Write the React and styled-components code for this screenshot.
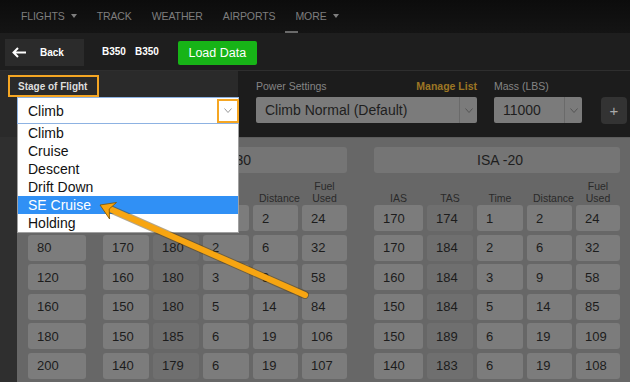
import React from 'react';
import styled, { createGlobalStyle } from 'styled-components';

const GlobalStyle = createGlobalStyle`
  html, body { margin: 0; padding: 0; background: #1c1c1c; }
  body { font-family: "Liberation Sans", Arial, sans-serif; }
  * { box-sizing: border-box; }
`;

const ORANGE = '#f5a623';

const navItems = [
  { label: 'FLIGHTS', caret: true },
  { label: 'TRACK' },
  { label: 'WEATHER' },
  { label: 'AIRPORTS' },
  { label: 'MORE', caret: true, active: true },
];

const stages = ['Climb', 'Cruise', 'Descent', 'Drift Down', 'SE Cruise', 'Holding'];

const altitudes = ['40', '80', '120', '160', '180', '200'];

const leftRows = [
  ['170', '174', '1', '2', '24'],
  ['170', '180', '2', '6', '32'],
  ['160', '180', '3', '9', '58'],
  ['150', '180', '5', '14', '84'],
  ['150', '185', '6', '19', '106'],
  ['140', '179', '6', '19', '107'],
];

const rightRows = [
  ['170', '174', '1', '2', '24'],
  ['170', '184', '2', '6', '32'],
  ['160', '184', '3', '9', '58'],
  ['150', '184', '5', '14', '85'],
  ['150', '189', '6', '19', '109'],
  ['140', '183', '6', '19', '108'],
];

const columns = ['IAS', 'TAS', 'Time', 'Distance', 'Fuel Used'];

export default function App() {
  return (
    <>
      <GlobalStyle />
      <Page>
        <NavBar>
          {navItems.map((item) => (
            <NavItem key={item.label} $active={item.active}>
              {item.label}
              {item.caret && <Caret />}
            </NavItem>
          ))}
        </NavBar>

        <Toolbar>
          <BackButton>
            <svg width="16" height="11" viewBox="0 0 16 11">
              <path d="M15 5.5H2.5M7 1L2.5 5.5L7 10" fill="none" stroke="#fff" strokeWidth="2" />
            </svg>
            <span>Back</span>
          </BackButton>
          <AircraftName>B350</AircraftName>
          <AircraftName>B350</AircraftName>
          <LoadButton>Load Data</LoadButton>
        </Toolbar>

        <Controls>
          <StagePanel>
            <StageLabel>Stage of Flight</StageLabel>
            <StageSelect>
              <span>Climb</span>
              <ChevronBox>
                <Chevron color="#999" />
              </ChevronBox>
              <StageMenu>
                {stages.map((s) => (
                  <StageOption key={s} $selected={s === 'SE Cruise'}>
                    {s}
                  </StageOption>
                ))}
              </StageMenu>
            </StageSelect>
          </StagePanel>

          <Field $width={221} $margin={18}>
            <LabelRow>
              <FieldLabel>Power Settings</FieldLabel>
              <ManageLink>Manage List</ManageLink>
            </LabelRow>
            <DimSelect>
              <span>Climb Normal (Default)</span>
              <SelectArrow>
                <Chevron color="#555" />
              </SelectArrow>
            </DimSelect>
          </Field>

          <Field $width={88} $margin={17}>
            <LabelRow>
              <FieldLabel>Mass (LBS)</FieldLabel>
            </LabelRow>
            <DimSelect>
              <span>11000</span>
              <SelectArrow>
                <Chevron color="#555" />
              </SelectArrow>
            </DimSelect>
          </Field>

          <PlusButton>+</PlusButton>
        </Controls>

        <TableArea>
          <SideStrip />
          <TablePanel>
            <Group $offset={0}>
              <HeaderSlot />
              <Grid $cols="58px">
                <ColLabel>Altitude</ColLabel>
                {altitudes.map((a) => (
                  <Cell key={a}>{a}</Cell>
                ))}
              </Grid>
            </Group>

            <Group $offset={17}>
              <HeaderBox>ISA -30</HeaderBox>
              <Grid $cols="46px 46px 46px 45px 45px">
                {columns.map((c) => (
                  <ColLabel key={c}>{c}</ColLabel>
                ))}
                {leftRows.map((row, r) =>
                  row.map((v, i) => (
                    <Cell key={`l${r}-${i}`} $dim={i === 1}>
                      {v}
                    </Cell>
                  ))
                )}
              </Grid>
            </Group>

            <Group $offset={27}>
              <HeaderBox>ISA -20</HeaderBox>
              <Grid $cols="49px 46px 46px 45px 44px">
                {columns.map((c) => (
                  <ColLabel key={c}>{c}</ColLabel>
                ))}
                {rightRows.map((row, r) =>
                  row.map((v, i) => (
                    <Cell key={`r${r}-${i}`} $dim={i === 1}>
                      {v}
                    </Cell>
                  ))
                )}
              </Grid>
            </Group>
          </TablePanel>
        </TableArea>

        <Annotation viewBox="0 0 630 382" width="630" height="382">
          <line x1="305" y1="295" x2="110" y2="209" stroke="#5a3c00" strokeWidth="8" strokeLinecap="round" opacity="0.45" />
          <line x1="305" y1="295" x2="110" y2="209" stroke="#f7a511" strokeWidth="6" strokeLinecap="round" />
          <polygon points="100,205 116.5,202.5 109.2,209 109.6,219" fill="#f7a511" stroke="#7a5200" strokeWidth="0.8" strokeLinejoin="round" />
        </Annotation>
      </Page>
    </>
  );
}

function Chevron({ color }) {
  return (
    <svg width="8" height="5" viewBox="0 0 8 5">
      <polyline points="0.5,0.5 4,4.5 7.5,0.5" fill="none" stroke={color} strokeWidth="1" />
    </svg>
  );
}

const Page = styled.div`
  position: relative;
  width: 630px;
  height: 382px;
  overflow: hidden;
  background: #1c1c1c;
  display: flex;
  flex-direction: column;
`;

const NavBar = styled.nav`
  height: 33px;
  flex-shrink: 0;
  display: flex;
  align-items: stretch;
  gap: 20px;
  padding-left: 21px;
  background: linear-gradient(#0c0c0c, #141414);
`;

const NavItem = styled.div`
  position: relative;
  display: flex;
  align-items: center;
  padding-bottom: 2px;
  font-size: 10.5px;
  color: #7e7e7e;
  letter-spacing: -0.1px;
  &::before {
    content: '';
    display: ${({ $active }) => ($active ? 'block' : 'none')};
    position: absolute;
    left: -10px;
    bottom: 0;
    width: 13px;
    height: 2px;
    background: #6a6a6a;
  }
`;

const Caret = styled.span`
  margin-left: 6px;
  width: 0;
  height: 0;
  border-left: 3px solid transparent;
  border-right: 3px solid transparent;
  border-top: 4px solid #7e7e7e;
`;

const Toolbar = styled.div`
  height: 38px;
  flex-shrink: 0;
  display: flex;
  align-items: center;
  padding-left: 5px;
  background: #1e1e1e;
  border-bottom: 1px solid #2e2e2e;
`;

const BackButton = styled.div`
  width: 79px;
  height: 27px;
  margin-top: 1px;
  display: flex;
  align-items: center;
  gap: 13px;
  padding-left: 6px;
  background: #2b2b2b;
  color: #fff;
  font-size: 10px;
  font-weight: bold;
`;

const AircraftName = styled.div`
  margin-left: 9px;
  &:nth-of-type(2) {
    margin-left: 18px;
  }
  color: #fff;
  font-size: 10px;
  font-weight: bold;
`;

const LoadButton = styled.div`
  margin-left: 19px;
  width: 79px;
  height: 24px;
  margin-top: 2px;
  display: flex;
  align-items: center;
  justify-content: center;
  background: #17b417;
  border-radius: 2px;
  color: #fff;
  font-size: 12.5px;
`;

const Controls = styled.div`
  height: 66px;
  flex-shrink: 0;
  display: flex;
  align-items: flex-start;
  background: #1c1c1c;
  position: relative;
  z-index: 2;
`;

const StagePanel = styled.div`
  width: 238px;
  align-self: stretch;
  background: #2a2a2a;
  padding-top: 4px;
`;

const StageLabel = styled.div`
  margin-left: 8px;
  width: 91px;
  height: 22px;
  border: 2px solid ${ORANGE};
  padding-left: 8px;
  display: flex;
  align-items: center;
  color: #ddd;
  font-size: 10px;
  font-weight: bold;
`;

const StageSelect = styled.div`
  position: relative;
  margin-left: 17px;
  width: 222px;
  height: 27px;
  display: flex;
  align-items: center;
  justify-content: space-between;
  padding-left: 10px;
  background: #fff;
  border: 1px solid #8db2e2;
  color: #111;
  font-size: 14px;
`;

const ChevronBox = styled.div`
  width: 22px;
  height: 24px;
  margin-right: -1px;
  border: 2px solid ${ORANGE};
  display: flex;
  align-items: center;
  justify-content: center;
  background: #fff;
`;

const StageMenu = styled.div`
  position: absolute;
  top: 26px;
  left: -1px;
  width: 222px;
  background: #fff;
  border: 1px solid #a0a0a0;
  border-top: none;
`;

const StageOption = styled.div`
  height: 18px;
  line-height: 18px;
  padding-left: 10px;
  font-size: 14px;
  color: ${({ $selected }) => ($selected ? '#fff' : '#111')};
  background: ${({ $selected }) => ($selected ? '#3090f5' : '#fff')};
`;

const Field = styled.div`
  width: ${({ $width }) => $width}px;
  margin-left: ${({ $margin }) => $margin}px;
  padding-top: 9px;
`;

const LabelRow = styled.div`
  height: 12px;
  margin-bottom: 5px;
  display: flex;
  align-items: center;
  justify-content: space-between;
`;

const FieldLabel = styled.span`
  font-size: 10.5px;
  color: #858585;
`;

const ManageLink = styled.span`
  font-size: 10.5px;
  font-weight: bold;
  color: #9c7624;
`;

const DimSelect = styled.div`
  height: 26px;
  display: flex;
  align-items: center;
  justify-content: space-between;
  padding-left: 9px;
  background: #7b7b7b;
  border-radius: 2px;
  color: #1e1e1e;
  font-size: 14px;
`;

const SelectArrow = styled.div`
  width: 18px;
  height: 100%;
  display: flex;
  align-items: center;
  justify-content: center;
  border-left: 1px solid #6a6a6a;
`;

const PlusButton = styled.div`
  margin-left: 19px;
  margin-top: 26px;
  width: 26px;
  height: 27px;
  display: flex;
  align-items: center;
  justify-content: center;
  background: #333;
  border-radius: 4px;
  color: #aaa;
  font-size: 15px;
`;

const TableArea = styled.div`
  flex: 1;
  display: flex;
  min-height: 0;
`;

const SideStrip = styled.div`
  width: 17px;
  background: #2f2f2f;
`;

const TablePanel = styled.div`
  flex: 1;
  display: flex;
  align-items: flex-start;
  padding: 9px 0 0 11px;
  background: #676767;
  border-top: 1px solid #5c5c5c;
  overflow: hidden;
`;

const Group = styled.div`
  margin-left: ${({ $offset }) => $offset}px;
  display: flex;
  flex-direction: column;
`;

const HeaderSlot = styled.div`
  height: 26px;
`;

const HeaderBox = styled.div`
  height: 26px;
  display: flex;
  align-items: center;
  justify-content: center;
  padding-left: 6px;
  background: #757575;
  border-radius: 3px;
  color: #1e1e1e;
  font-size: 14px;
`;

const Grid = styled.div`
  display: grid;
  grid-template-columns: ${({ $cols }) => $cols};
  grid-template-rows: 28.5px repeat(6, 26px);
  column-gap: 4px;
  row-gap: 3.5px;
`;

const ColLabel = styled.div`
  align-self: end;
  margin-bottom: -2px;
  text-align: center;
  font-size: 10.5px;
  line-height: 12px;
  color: #2a2a2a;
  padding: 0 6px;
`;

const Cell = styled.div`
  display: flex;
  align-items: center;
  padding-left: 9px;
  background: ${({ $dim }) => ($dim ? '#6f6f6f' : '#7c7c7c')};
  border-radius: 3px;
  color: #1c1c1c;
  font-size: 13px;
`;

const Annotation = styled.svg`
  position: absolute;
  left: 0;
  top: 0;
  pointer-events: none;
  z-index: 5;
`;
